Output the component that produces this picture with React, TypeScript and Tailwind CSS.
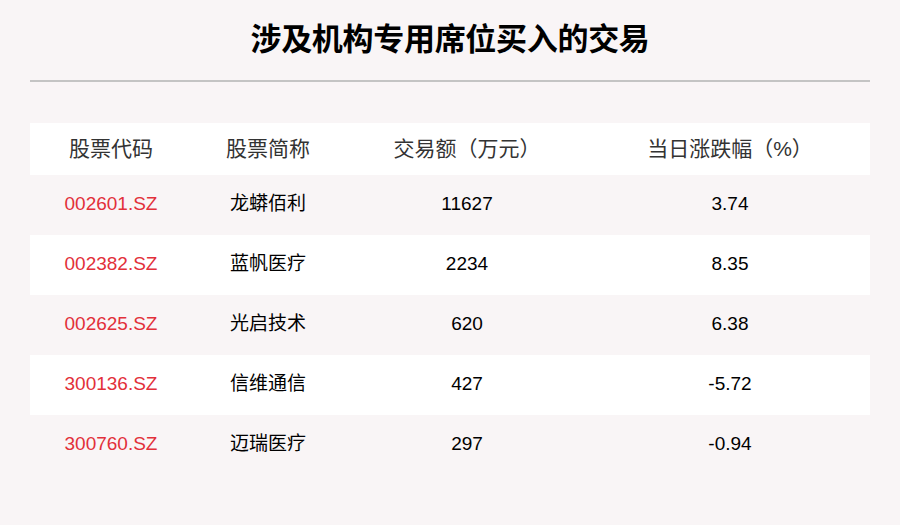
import React from "react";

const rows = [
  ["002601.SZ", "龙蟒佰利", "11627", "3.74"],
  ["002382.SZ", "蓝帆医疗", "2234", "8.35"],
  ["002625.SZ", "光启技术", "620", "6.38"],
  ["300136.SZ", "信维通信", "427", "-5.72"],
  ["300760.SZ", "迈瑞医疗", "297", "-0.94"],
];

const cjk = { fontFamily: '"Liberation Sans", "Noto Sans CJK SC", sans-serif' };

function L() {
  return <span className="inline-block w-[1em] text-right">（</span>;
}
function R() {
  return <span className="inline-block w-[1em] text-left">）</span>;
}

export default function App() {
  return (
    <div className="w-[900px] h-[525px] bg-[#f9f5f6] flex flex-col" style={cjk}>
      <div className="h-[80px] flex items-center justify-center pb-[2px]">
        <h1 className="text-[31px] font-bold text-black leading-none tracking-[-0.3px]">
          涉及机构专用席位买入的交易
        </h1>
      </div>
      <div className="mx-[30px] h-[2px] bg-[#c4c4c4]" />
      <div className="mx-[30px] mt-[41px]">
        <div className="grid grid-cols-[162px_152px_246px_280px] h-[52px] bg-white items-center text-[21px] text-[#333333]">
          <div className="text-center">股票代码</div>
          <div className="text-center">股票简称</div>
          <div className="text-center whitespace-nowrap">
            交易额<L />万元<R />
          </div>
          <div className="text-center whitespace-nowrap">
            当日涨跌幅<L />%<R />
          </div>
        </div>
        {rows.map((r, i) => (
          <div
            key={r[0]}
            className={`grid grid-cols-[162px_152px_246px_280px] h-[60px] items-center text-[19px] pb-[1px] ${
              i % 2 === 0 ? "bg-[#f9f5f6]" : "bg-white"
            }`}
          >
            <div className="text-center text-[#e2303a]">{r[0]}</div>
            <div className="text-center text-black">{r[1]}</div>
            <div className="text-center text-black">{r[2]}</div>
            <div className="text-center text-black">{r[3]}</div>
          </div>
        ))}
      </div>
    </div>
  );
}
